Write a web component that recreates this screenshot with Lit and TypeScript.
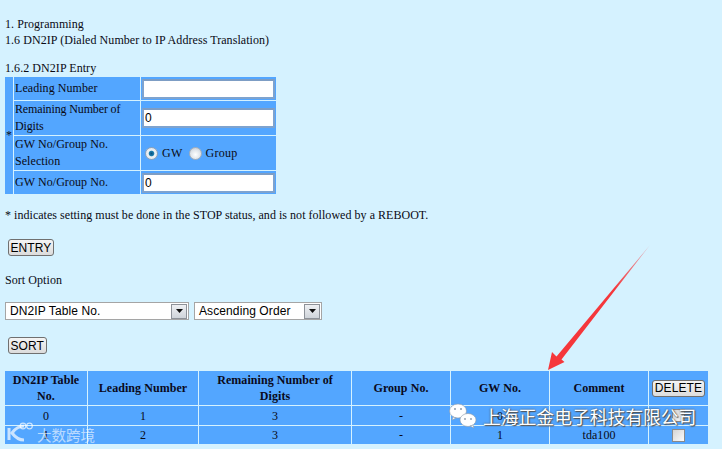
import { LitElement, html, css } from "lit";
import { customElement } from "lit/decorators.js";

@customElement("app-root")
export class AppRoot extends LitElement {
  static styles = css`
    :host {
      display: block;
      position: relative;
      width: 722px;
      height: 449px;
      overflow: hidden;
      background: #d5f2ff;
      color: #0a0a14;
      font: 12px/16px "Liberation Serif", serif;
      letter-spacing: 0.06px;
    }
    .page { padding: 16px 4px 0 4px; display: flex; flex-direction: column; }
    .line { padding-left: 1px; }
    .gap { margin-top: 12px; }
    table { border-collapse: separate; border-spacing: 1px; }
    td, th { background: #53a6ff; padding: 0 1px; }
    .entry { width: 273px; table-layout: fixed; }
    .entry td { line-height: 17px; }
    .c-star { width: 8px; }
    .c-label { width: 126px; }
    .star { padding: 0 1px; vertical-align: middle; }
    .label { padding: 0 1px; }
    .tight { letter-spacing: -0.14px; }
    .val { padding: 0; }
    .h-23 { height: 23px; }
    .h-34 { height: 34px; }
    .txt {
      display: block; box-sizing: border-box; width: 133px; height: 20px; margin: 0 0 0 1px;
      border: 2px solid #7ea3cf; border-top-color: #7d9dc4; background: #fff; padding: 0 1px;
      font: 12px "Liberation Sans", sans-serif; color: #000; outline: none;
    }
    .radios { display: flex; align-items: center; padding-left: 4px; letter-spacing: 0.25px; }
    .radio {
      appearance: none; width: 13px; height: 13px; margin: 0 4px 0 0; border-radius: 50%;
      border: 1px solid #a8b0ba;
      background: radial-gradient(circle at 50% 60%, #ffffff 0, #dfe4ea 55%, #b9c0c9 100%);
    }
    .radio:checked {
      border-color: #8fa3b8;
      background: radial-gradient(circle, #0b4f7c 0, #1d7fb0 30%, #eef3f7 42%, #d6dce3 100%);
    }
    .radios label + .radio { margin-left: 6px; }
    .btn {
      box-sizing: border-box; height: 17px; padding: 0 1.5px; border: 1px solid #707070; border-radius: 3px;
      background: linear-gradient(#f4f4f4, #dcdcdc); color: #000; white-space: nowrap;
      font: 12px/14px "Liberation Sans", sans-serif; letter-spacing: 0.1px;
    }
    .btn-row { padding-left: 4px; display: flex; }
    .note { margin-top: 12px; padding-left: 1px; letter-spacing: 0.035px; }
    .entry-btn { margin-top: 16px; }
    .sort-label { margin-top: 16px; padding-left: 1px; }
    .sort-btn { margin-top: 17px; }
    .sort { display: flex; gap: 5px; padding-left: 1px; margin-top: 14px; }
    .select {
      display: flex; align-items: center; justify-content: space-between; box-sizing: border-box; height: 18px;
      border: 1px solid #a5a5a5; background: #fff; padding: 0 1px 0 4px;
      font: 12px "Liberation Sans", sans-serif; color: #000; letter-spacing: 0.1px;
    }
    .s1 { width: 184px; }
    .s2 { width: 128px; }
    .arrow {
      width: 16px; height: 15px; box-sizing: border-box; border: 1px solid #8d9299;
      background: linear-gradient(#eef0f3, #cfd4da); display: flex; align-items: center; justify-content: center;
    }
    .list { width: 705px; table-layout: fixed; margin-top: 16px; text-align: center; }
    .list th { font-weight: bold; height: 34px; color: #0a0a20; padding: 0 4px; }
    .list th.wide { padding: 0 12px; }
    .list td { height: 19px; line-height: 16px; }
    .list tr.r2 td { height: 18px; }
    .w1 { width: 82px; } .w2 { width: 110px; } .w3 { width: 152px; }
    .w4, .w5, .w6 { width: 98px; }
    .check {
      appearance: none; display: block; margin: 0 auto; width: 13px; height: 13px;
      border: 1px solid #8a8a8a; background: linear-gradient(135deg, #d4d4d4, #fbfbfb);
    }
    .del { margin: 0 auto; display: block; height: 17px; }
    .list th.delcell { padding: 0; }
    .overlay { position: absolute; inset: 0; width: 722px; height: 449px; pointer-events: none; }
    .mark {
      position: absolute; left: 483px; top: 405px; white-space: nowrap; color: #fff; letter-spacing: 0;
      font: 17.8px/22px "Noto Sans CJK SC", sans-serif; text-shadow: 0 0 2px #444, 1px 1px 1px #555;
    }
    .mark2 {
      position: absolute; left: 37px; top: 425px; white-space: nowrap; color: rgba(255,255,255,.62); letter-spacing: 0;
      font: 14.5px/20px "Noto Sans CJK SC", sans-serif;
    }
  `;

  private tri() {
    return html`<span class="arrow"><svg width="7" height="4" viewBox="0 0 7 4"><path d="M0 0h7L3.5 4z" fill="#111"/></svg></span>`;
  }

  render() {
    return html`
      <div class="page">
        <div class="line">1. Programming</div>
        <div class="line">1.6 DN2IP (Dialed Number to IP Address Translation)</div>
        <div class="line gap">1.6.2 DN2IP Entry</div>
        <table class="entry">
          <colgroup><col class="c-star" /><col class="c-label" /><col /></colgroup>
          <tr class="h-23">
            <td class="star" rowspan="4">*</td>
            <td class="label">Leading Number</td>
            <td class="val"><input class="txt" type="text" /></td>
          </tr>
          <tr class="h-34">
            <td class="label tight">Remaining Number of Digits</td>
            <td class="val"><input class="txt" type="text" value="0" /></td>
          </tr>
          <tr class="h-34">
            <td class="label">GW No/Group No. Selection</td>
            <td class="val">
              <div class="radios">
                <input class="radio" type="radio" name="g" checked /><label>GW</label>
                <input class="radio" type="radio" name="g" /><label>Group</label>
              </div>
            </td>
          </tr>
          <tr class="h-23">
            <td class="label">GW No/Group No.</td>
            <td class="val"><input class="txt" type="text" value="0" /></td>
          </tr>
        </table>
        <div class="note">* indicates setting must be done in the STOP status, and is not followed by a REBOOT.</div>
        <div class="btn-row entry-btn"><button class="btn">ENTRY</button></div>
        <div class="sort-label">Sort Option</div>
        <div class="sort">
          <div class="select s1"><span>DN2IP Table No.</span>${this.tri()}</div>
          <div class="select s2"><span>Ascending Order</span>${this.tri()}</div>
        </div>
        <div class="btn-row sort-btn"><button class="btn">SORT</button></div>
        <table class="list">
          <colgroup>
            <col class="w1" /><col class="w2" /><col class="w3" /><col class="w4" /><col class="w5" /><col class="w6" /><col />
          </colgroup>
          <tr>
            <th>DN2IP Table No.</th><th>Leading Number</th><th class="wide">Remaining Number of Digits</th>
            <th>Group No.</th><th>GW No.</th><th>Comment</th>
            <th class="delcell"><button class="btn del">DELETE</button></th>
          </tr>
          ${[
            ["0", "1", "3", "-", "0", "-"],
            ["1", "2", "3", "-", "1", "tda100"],
          ].map(
            (r, i) => html`<tr class=${i ? "r2" : ""}>
              ${r.map((c) => html`<td>${c}</td>`)}
              <td><input class="check" type="checkbox" /></td>
            </tr>`
          )}
        </table>
      </div>
      <svg class="overlay" viewBox="0 0 722 449">
        <defs>
          <linearGradient id="fade" gradientUnits="userSpaceOnUse" x1="650" y1="245" x2="615" y2="290">
            <stop offset="0" stop-color="#f5373b" stop-opacity=".35" />
            <stop offset="1" stop-color="#f5373b" />
          </linearGradient>
        </defs>
        <path d="M548 370 552 352 556.5 356.5 650 245 561.5 359.5 564.5 362Z" fill="url(#fade)" />
        <g fill="#fff" stroke="#8b98a8" stroke-width=".6">
          <ellipse cx="458" cy="411" rx="8.5" ry="7" />
          <path d="M453 417l-1 3 4-2z" />
          <ellipse cx="468" cy="420" rx="8" ry="6.5" />
          <path d="M473 425l1 3-4-2z" />
        </g>
        <g fill="#8b98a8">
          <circle cx="455" cy="409" r="1" /><circle cx="461" cy="409" r="1" />
          <circle cx="465" cy="419" r=".9" /><circle cx="471" cy="419" r=".9" />
        </g>
        <g fill="none" stroke="#fff" stroke-opacity=".7" stroke-width="2">
          <path d="M9 428v12" stroke-width="3" />
          <path d="M24 426c-6 0-9 3-12 7 3 4 6 7 12 7" stroke-width="3" />
          <circle cx="23" cy="426" r="2.8" stroke-width="1.2" />
          <circle cx="29.5" cy="426" r="2.8" stroke-width="1.2" />
        </g>
      </svg>
      <div class="mark">上海正金电子科技有限公司</div>
      <div class="mark2">大数跨境</div>
    `;
  }
}
